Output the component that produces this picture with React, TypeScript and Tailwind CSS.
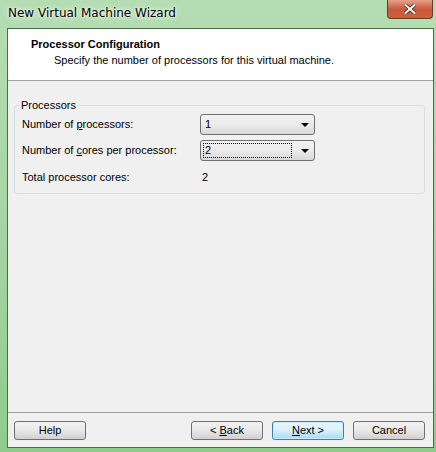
import React, { FC } from 'react';

const font = { fontFamily: '"Liberation Sans", Tahoma, Arial, sans-serif' };

const Select: FC<{ value: string; focused?: boolean }> = ({ value, focused }) => {
  return (
    <div className="flex h-[21px] w-[115px] items-center rounded-[3px] border border-[#707070] bg-gradient-to-b from-[#f2f2f2] via-[#ebebeb] to-[#d8d8d8] pl-[2px] pr-[5px]">
      <div
        className={
          'flex h-[15px] flex-1 items-center pl-[1px] text-[11px] text-black ' +
          (focused ? 'border border-dotted border-black' : 'border border-transparent')
        }
      >
        {value}
      </div>
      <div className="ml-[9px] h-0 w-0 border-x-[4px] border-t-[4px] border-x-transparent border-t-black" />
    </div>
  );
};

const Button: FC<{ primary?: boolean; children: React.ReactNode }> = ({ primary, children }) => {
  return (
    <button
      className={
        'flex h-[19px] w-[72px] shrink-0 items-center justify-center rounded-[3px] border text-[11px] text-black ' +
        (primary
          ? 'border-[#3c7fb1] bg-gradient-to-b from-[#eaf6fd] via-[#d9f0fc] to-[#a7d9f5] shadow-[inset_0_0_0_1px_#c8ecfd]'
          : 'border-[#707070] bg-gradient-to-b from-[#f2f2f2] via-[#e8e8e8] to-[#d0d0d0]')
      }
    >
      {children}
    </button>
  );
};

export default function App() {
  return (
    <div style={font} className="h-[452px] w-[436px] overflow-hidden bg-gradient-to-b from-[#b5ddb3] via-[#a6d5a3] to-[#8fcb8b]">
      {/* title bar */}
      <div className="relative flex h-[28px] items-center">
        <span
          className="pb-[3px] pl-[8px] text-[12px] text-black"
          style={{ fontFamily: '"DejaVu Sans", sans-serif', textShadow: '0 0 6px #ffffff, 0 0 3px #ffffff' }}
        >
          New Virtual Machine Wizard
        </span>
        <div className="absolute right-[3px] top-0 flex h-[19px] w-[46px] items-center justify-center rounded-b-[4px] border border-t-0 border-[#6b3a2a] bg-gradient-to-b from-[#e8a08a] via-[#c85a3c] to-[#d0603c]">
          <svg width="12" height="10" viewBox="0 0 12 10">
            <path d="M1.5 1 L10.5 9 M10.5 1 L1.5 9" stroke="#3a2a2a" strokeWidth="3.6" strokeLinecap="square" />
            <path d="M1.5 1 L10.5 9 M10.5 1 L1.5 9" stroke="#ffffff" strokeWidth="2" strokeLinecap="square" />
          </svg>
        </div>
      </div>

      {/* client area */}
      <div className="ml-[7px] flex h-[420px] w-[427px] flex-col border border-[#4d6b4d] bg-[#f0f0f0]">
        <div className="h-[52px] border-b border-[#a0a0a0] bg-white pl-[23px] pt-[8px]">
          <div className="text-[11px] font-bold leading-[14px] text-black">Processor Configuration</div>
          <div className="pl-[23px] pt-[2px] text-[11px] leading-[14px] text-black">
            Specify the number of processors for this virtual machine.
          </div>
        </div>

        <div className="flex-1 pl-[6px] pr-[8px] pt-[24px]">
          <div className="relative h-[89px] rounded-[3px] border border-[#d5dfe5]">
            <span className="absolute -top-[8px] left-[5px] bg-[#f0f0f0] px-[1px] text-[11px] leading-[14px] text-black">
              Processors
            </span>
            <div className="flex flex-col pl-[7px] pt-[8px] text-[11px] text-black">
              <div className="flex h-[21px] items-center">
                <span className="w-[178px]">
                  Number of <span className="underline">p</span>rocessors:
                </span>
                <Select value="1" />
              </div>
              <div className="mt-[5px] flex h-[21px] items-center">
                <span className="w-[178px]">
                  Number of <span className="underline">c</span>ores per processor:
                </span>
                <Select value="2" focused />
              </div>
              <div className="mt-[6px] flex h-[21px] items-center">
                <span className="w-[180px]">Total processor cores:</span>
                <span>2</span>
              </div>
            </div>
          </div>
        </div>

        <div className="h-[35px] border-t border-[#a0a0a0] pl-[6px] pr-[8px] pt-[8px]">
          <div className="flex items-center">
            <Button>Help</Button>
            <div className="flex-1" />
            <Button>
              &lt;&nbsp;<span className="underline">B</span>ack
            </Button>
            <div className="w-[9px]" />
            <Button primary>
              <span className="underline">N</span>ext &gt;
            </Button>
            <div className="w-[9px]" />
            <Button>Cancel</Button>
          </div>
        </div>
      </div>
    </div>
  );
}
